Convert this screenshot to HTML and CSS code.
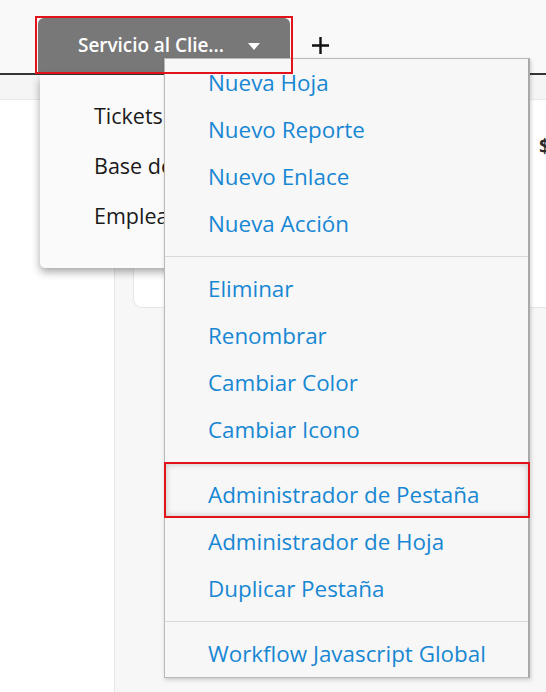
FILE: index.html
```html
<!DOCTYPE html>
<html lang="es">
<head>
<meta charset="utf-8">
<link rel="stylesheet" href="styles.css">
</head>
<body>
<div class="page">
  <header class="topbar">
    <div class="tab">
      <span class="tab-label">Servicio al Clie...</span>
      <span class="caret"></span>
    </div>
    <span class="add">
      <svg width="17" height="17" viewBox="0 0 17 17"><path d="M8.5 0v17M0 8.5h17" stroke="#111" stroke-width="2.4" fill="none"/></svg>
    </span>
  </header>
  <div class="rule"></div>
  <div class="subbar"></div>
  <main class="content">
    <aside class="leftcol"></aside>
    <section class="panel">
      <div class="card"><span class="money">$</span></div>
    </section>
  </main>

  <ul class="sheet-menu">
    <li>Tickets</li>
    <li>Base de Conocimiento</li>
    <li>Empleados</li>
  </ul>

  <ul class="tab-menu">
    <li class="item">Nueva Hoja</li>
    <li class="item">Nuevo Reporte</li>
    <li class="item">Nuevo Enlace</li>
    <li class="item">Nueva Acción</li>
    <li class="sep"></li>
    <li class="item">Eliminar</li>
    <li class="item">Renombrar</li>
    <li class="item">Cambiar Color</li>
    <li class="item">Cambiar Icono</li>
    <li class="sep"></li>
    <li class="item hover">Administrador de Pestaña</li>
    <li class="item">Administrador de Hoja</li>
    <li class="item">Duplicar Pestaña</li>
    <li class="sep"></li>
    <li class="item">Workflow Javascript Global</li>
  </ul>

  <div class="mark mark-tab"></div>
</div>
</body>
</html>
```
FILE: styles.css
```css
* { box-sizing: border-box; }
html, body { margin: 0; padding: 0; }
body {
  font-family: "Open Sans", "DejaVu Sans", sans-serif;
  background: #ffffff;
  width: 546px;
  height: 692px;
  overflow: hidden;
}
.page {
  position: relative;
  width: 546px;
  height: 692px;
  overflow: hidden;
}
.topbar {
  height: 73px;
  background: #f9f9f9;
  display: flex;
  align-items: flex-end;
  padding-left: 38px;
}
.tab {
  width: 252px;
  height: 55px;
  background: #787878;
  border-radius: 6px 6px 0 0;
  display: flex;
  align-items: center;
  padding-left: 40px;
  padding-bottom: 1px;
  color: #fff;
  flex-shrink: 0;
}
.tab-label {
  font-size: 19px;
  font-weight: 600;
  letter-spacing: -0.05px;
}
.caret {
  margin-left: 24px;
  width: 0;
  height: 0;
  border-left: 6px solid transparent;
  border-right: 6px solid transparent;
  border-top: 7px solid #fff;
  margin-top: 3px;
}
.add {
  display: flex;
  align-self: center;
  margin-left: 22px;
  margin-top: 18px;
}
.rule {
  height: 2px;
  background: #343434;
}
.subbar {
  height: 25px;
  background: #f5f5f5;
  border-bottom: 1px solid #e8e8e8;
}
.content {
  display: flex;
  height: 592px;
}
.leftcol {
  width: 115px;
  flex-shrink: 0;
  background: #ffffff;
  border-right: 1px solid #e6e6e6;
}
.panel {
  flex: 1;
  min-width: 0;
  overflow: hidden;
  background: #f7f7f7;
  padding-left: 18px;
}
.card {
  width: 520px;
  height: 208px;
  background: #ffffff;
  border: 1px solid #e6e6e6;
  border-top: none;
  border-radius: 0 0 0 9px;
  padding: 32px 0 0 405px;
}
.money {
  font-size: 20px;
  font-weight: 700;
  color: #2b2b2b;
}

.sheet-menu {
  position: absolute;
  left: 40px;
  top: 75px;
  width: 160px;
  height: 193px;
  margin: 0;
  padding: 16px 0 0 54px;
  list-style: none;
  background: #fafafa;
  border-radius: 0 0 5px 5px;
  box-shadow: 0 4px 9px rgba(0,0,0,0.35);
  z-index: 2;
  white-space: nowrap;
  overflow: hidden;
}
.sheet-menu li {
  height: 50px;
  line-height: 50px;
  font-size: 21.5px;
  color: #1a1a1a;
}

.tab-menu {
  position: absolute;
  left: 164px;
  top: 58px;
  width: 366px;
  margin: 0;
  padding: 0;
  list-style: none;
  background: #f7f7f7;
  border: 1px solid #b9b9b9;
  border-right: 2px solid #a9a9a9;
  box-shadow: 1px 2px 4px rgba(0,0,0,0.18);
  z-index: 3;
}
.tab-menu .item {
  height: 47px;
  line-height: 47px;
  padding-left: 43px;
  font-size: 22.4px;
  color: #1787d3;
  white-space: nowrap;
}
.tab-menu .sep {
  height: 1px;
  background: #dadada;
  margin: 9px 0 8px;
}
.tab-menu .item.hover {
  position: relative;
}
.tab-menu .item.hover::after {
  content: "";
  position: absolute;
  left: -1px;
  right: -2px;
  top: -9px;
  bottom: 0;
  border: 2px solid #e3131b;
  box-shadow: inset 0 0 6px rgba(0,0,0,0.22);
}
.mark {
  position: absolute;
  border: 2px solid #e3131b;
  z-index: 5;
}
.mark-tab {
  left: 35px;
  top: 16px;
  width: 258px;
  height: 58px;
}
```
